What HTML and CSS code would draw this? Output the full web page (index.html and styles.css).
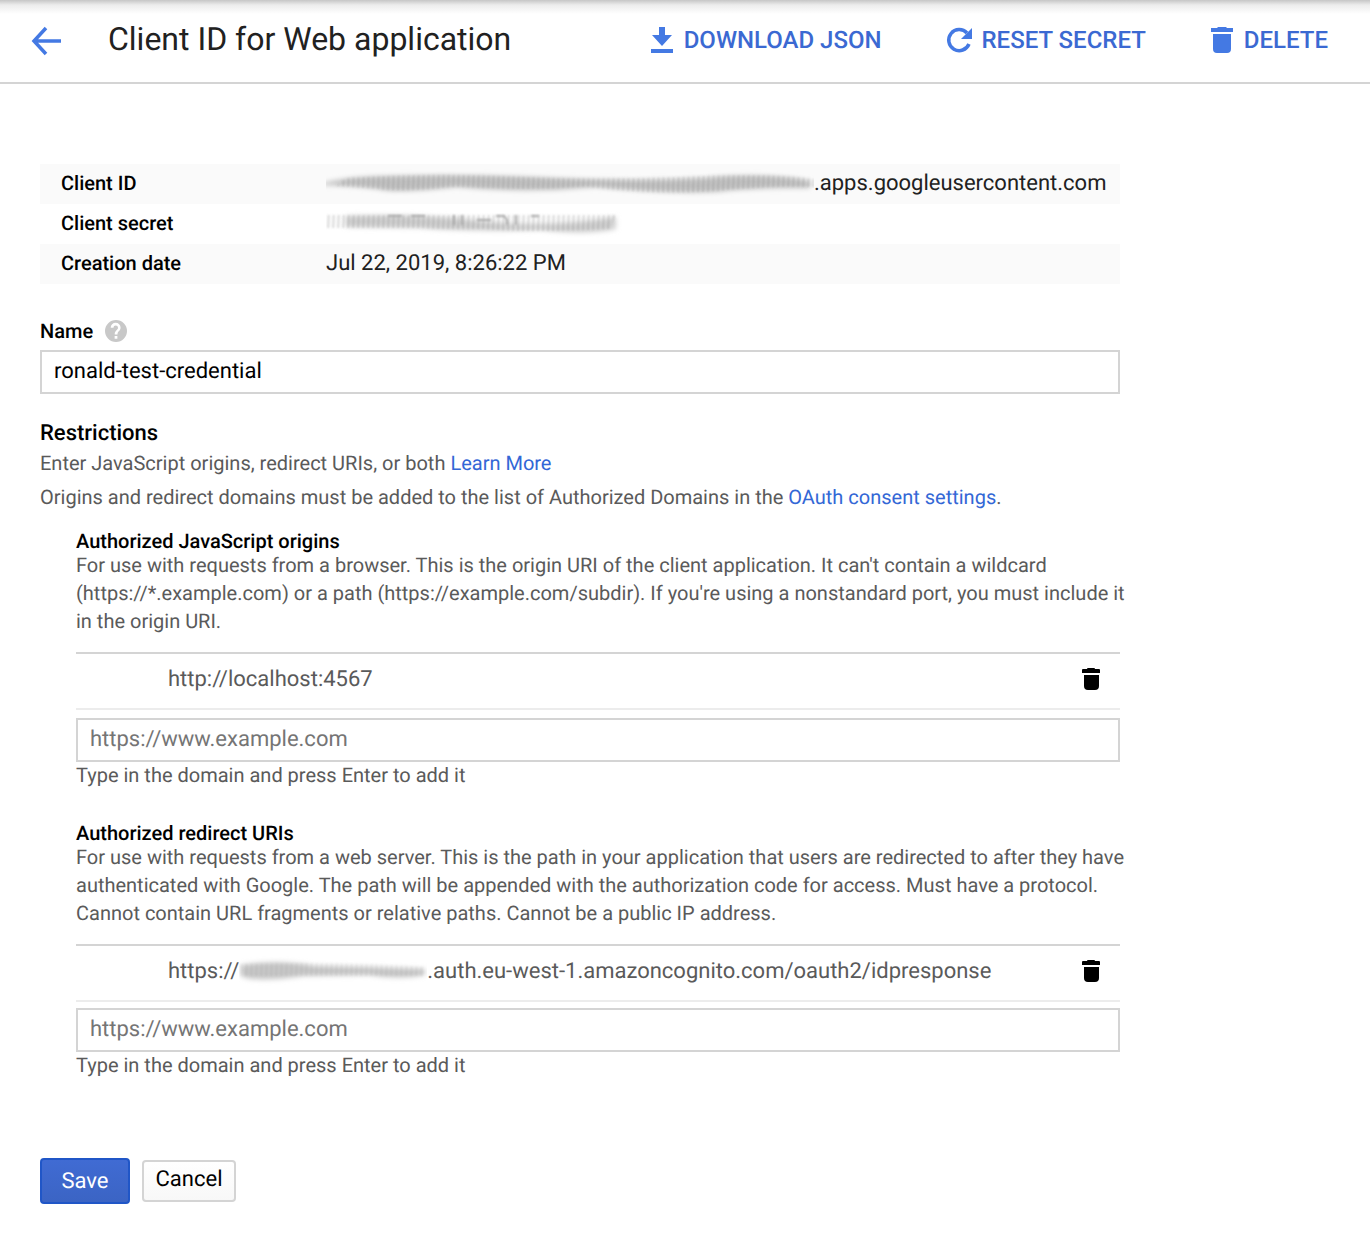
FILE: index.html
```html
<!DOCTYPE html>
<html lang="en">
<head>
<meta charset="utf-8">
<meta name="viewport" content="width=device-width, initial-scale=1">
<title>Client ID for Web application</title>
<link rel="stylesheet" href="styles.css">
</head>
<body>
<svg class="defs" aria-hidden="true">
  <defs>
    <symbol id="trash" viewBox="0 0 24 24"><path d="M7 2q0-1 1-1h6q1 0 1 1h4q1 0 1 1v3H2V3q0-1 1-1zM4 8h15v11q0 4-4 4H8q-4 0-4-4z"/></symbol>
    <pattern id="lines" width="5" height="24" patternUnits="userSpaceOnUse"><path d="M3 0l-1 24" stroke="#777" stroke-width="2" opacity=".3"/></pattern>
    <filter id="soft" x="-10%" y="-50%" width="120%" height="200%"><feGaussianBlur stdDeviation="2.500"/></filter>
    <filter id="fine" x="-10%" y="-50%" width="120%" height="200%"><feGaussianBlur stdDeviation="0.800"/></filter>
  </defs>
</svg>
<header class="topbar">
  <a class="back" href="#" aria-label="Back"><svg width="32" height="32" viewBox="0 0 32 32"><path d="M31 17H4M16 4L4 17l12 13" fill="none" stroke="currentColor" stroke-width="3.500"/></svg></a>
  <h1 class="title">Client ID for Web application</h1>
  <div class="actions">
    <button class="action" type="button"><svg width="24" height="28" viewBox="0 0 24 28"><path d="M9 1h6v8h7L12 20 2 9h7zM1 23h22v4H1z"/></svg>DOWNLOAD JSON</button>
    <button class="action" type="button"><svg width="26" height="28" viewBox="0 0 26 28"><path d="M21 7A10.500 10.500 0 1 0 23 18" fill="none" stroke="currentColor" stroke-width="3.500"/><path d="M26 2v11H15z"/></svg>RESET SECRET</button>
    <button class="action" type="button"><svg width="24" height="28" viewBox="0 0 24 28"><path d="M8 1h8l1 1h6v4H1V2h6zM3 8h18v15q0 4-4 4H7q-4 0-4-4z"/></svg>DELETE</button>
  </div>
</header>
<main class="content">
  <table class="info">
    <tbody>
      <tr><th scope="row">Client ID</th><td><span class="value"><svg class="smear" width="488" height="30" viewBox="0 0 488 30" aria-hidden="true">
        <path d="M-4 15Q25 8 60 8Q150 6 230 10T380 10Q440 4 484 13V20Q420 20 390 24Q340 26 270 19Q200 26 130 19Q70 26 52 21Q30 18-4 17z" fill="#c4c4c4" filter="url(#soft)"/>
        <path d="M20 10Q100 4 180 8T350 9Q440 4 488 11V19Q440 18 390 23T260 19Q200 23 130 19Q70 25 52 21L10 18z" fill="url(#lines)" filter="url(#fine)"/>
      </svg>.apps.googleusercontent.com</span></td></tr>
      <tr><th scope="row">Client secret</th><td><span class="value"><svg class="smear" width="296" height="30" viewBox="0 0 296 30" aria-hidden="true">
        <path d="M20 8Q90 5 155 13T290 9V21Q260 28 215 22Q140 24 95 20L20 19z" fill="#d2d2d2" filter="url(#soft)"/>
        <path d="M0 7H290L284 21Q200 25 155 21Q120 22 90 20H0z" fill="url(#lines)" filter="url(#fine)"/>
        <path d="M62 8h14M85 8h14M128 7v10M136 7v10M151 12h14M170 8h8l3 4v5M190 7v10M205 8h8" fill="none" stroke="#aaa" stroke-width="2" filter="url(#fine)"/>
      </svg></span></td></tr>
      <tr><th scope="row">Creation date</th><td>Jul 22, 2019, 8:26:22 PM</td></tr>
    </tbody>
  </table>
  <form class="form">
    <div class="label-row">
      <label for="name">Name</label>
      <svg width="22" height="22" viewBox="0 0 24 24" fill="#c8c8c8" role="img" aria-label="Help"><path d="M12 0a12 12 0 1 0 0 24 12 12 0 0 0 0-24zm1.500 20.500h-3v-3h3zm2.600-9.300-1 1.100c-.9.900-1.500 1.700-1.500 3.500h-3v-.7c0-1.300.6-2.500 1.500-3.400l1.400-1.500c.5-.4.700-1 .7-1.700a2.500 2.500 0 0 0-5 0h-3a5.400 5.400 0 0 1 10.800 0c0 1-.3 2-.9 2.700z"/></svg>
    </div>
    <input class="field" id="name" type="text" value="ronald-test-credential">
    <h2 class="heading">Restrictions</h2>
    <p class="intro">Enter JavaScript origins, redirect URIs, or both <a href="#">Learn More</a></p>
    <p class="intro">Origins and redirect domains must be added to the list of Authorized Domains in the <a href="#">OAuth consent settings</a>.</p>
    <section class="group">
      <label class="group-title" for="origin">Authorized JavaScript origins</label>
      <p class="description">For use with requests from a browser. This is the origin URI of the client application. It can't contain a wildcard (https://*.example.com) or a path (https://example.com/subdir). If you're using a nonstandard port, you must include it in the origin URI.</p>
      <div class="entry"><span class="value">http://localhost:4567</span><button class="remove" type="button" aria-label="Delete origin"><svg width="24" height="24"><use href="#trash"/></svg></button></div>
      <input class="field" id="origin" type="text" placeholder="https://www.example.com">
      <p class="hint">Type in the domain and press Enter to add it</p>
    </section>
    <section class="group">
      <label class="group-title" for="redirect">Authorized redirect URIs</label>
      <p class="description">For use with requests from a web server. This is the path in your application that users are redirected to after they have authenticated with Google. The path will be appended with the authorization code for access. Must have a protocol. Cannot contain URL fragments or relative paths. Cannot be a public IP address.</p>
      <div class="entry"><span class="value">https://<svg class="smear" width="188" height="30" viewBox="0 0 188 30" aria-hidden="true">
        <path d="M2 9Q40 3 75 10Q130 11 186 13V19Q160 24 130 19L65 20Q15 27 2 20z" fill="#c8c8c8" filter="url(#soft)"/>
        <path d="M2 8Q100 5 186 11V20H2z" fill="url(#lines)" opacity=".5" filter="url(#fine)"/>
      </svg>.auth.eu-west-1.amazoncognito.com/oauth2/idpresponse</span><button class="remove" type="button" aria-label="Delete redirect URI"><svg width="24" height="24"><use href="#trash"/></svg></button></div>
      <input class="field" id="redirect" type="text" placeholder="https://www.example.com">
      <p class="hint">Type in the domain and press Enter to add it</p>
    </section>
    <div class="buttons">
      <button class="save" type="submit">Save</button>
      <button class="cancel" type="button">Cancel</button>
    </div>
  </form>
</main>
</body>
</html>
```
FILE: styles.css
```css
* { box-sizing: border-box; }

body {
  margin: 0;
  background: #fff;
  color: #212121;
  font-family: Roboto, "Liberation Sans", sans-serif;
  font-size: 20px;
  text-rendering: geometricPrecision;
}

button, input { font: inherit; text-rendering: inherit; }
h1, h2, p { margin: 0; }
a { color: #3367d6; text-decoration: none; }
svg { flex: none; }
.defs { position: absolute; width: 0; height: 0; }

.topbar {
  display: flex;
  align-items: center;
  min-height: 84px;
  padding: 0 42px 2px 30px;
  border-bottom: 2px solid #d4d4d4;
  background: linear-gradient(#c6c6c6, #ececec 5px, #fff 14px);
}
.back { display: flex; color: #4479e3; }
.title {
  margin: 0 0 2px 46px;
  font-size: 32px;
  font-weight: 400;
  line-height: 40px;
}
.actions { display: flex; gap: 64px; margin-left: auto; }
.action {
  display: flex;
  align-items: center;
  gap: 10px;
  padding: 0;
  border: 0;
  background: none;
  color: #3b69d2;
  font-size: 24px;
  font-weight: 500;
  line-height: 32px;
  white-space: nowrap;
}
.action svg { color: #4479e3; fill: currentColor; }

.content { max-width: 1120px; padding: 80px 0 30px 40px; }

.info { width: 100%; border-collapse: collapse; }
.info tr:nth-child(odd) { background: #fafafa; }
.info th {
  width: 286px;
  height: 40px;
  padding: 0 0 2px 21px;
  color: #000;
  font-size: 20px;
  font-weight: 500;
  text-align: left;
}
.info td { padding: 0 0 2px; font-size: 22px; }
.value { display: flex; align-items: center; white-space: nowrap; }

.label-row {
  display: flex;
  align-items: center;
  gap: 12px;
  height: 30px;
  margin: 32px 0 4px;
  color: #000;
  font-weight: 500;
}
.field {
  display: block;
  width: 100%;
  height: 44px;
  padding: 0 12px 2px;
  border: 2px solid #d4d4d4;
  background: #fff;
  color: #000;
  font-size: 22px;
}
.field::placeholder { color: #757575; opacity: 1; }

.heading {
  margin: 25px 0 0;
  color: #000;
  font-size: 22px;
  font-weight: 500;
  line-height: 30px;
}
.intro { margin-bottom: 6px; color: #5a5a5a; line-height: 28px; }

.group { margin: 18px 0 32px 36px; color: #5a5a5a; }
.group-title {
  display: block;
  color: #000;
  font-weight: 500;
  line-height: 24px;
}
.description { margin: -2px -16px 17px 0; line-height: 28px; }
.entry {
  display: flex;
  align-items: center;
  justify-content: space-between;
  height: 58px;
  margin-bottom: 8px;
  padding: 0 16px 4px 92px;
  border-top: 2px solid #d4d4d4;
  border-bottom: 2px solid #ececec;
  font-size: 22px;
}
.group + .group .entry { margin-bottom: 6px; }
.remove { display: flex; padding: 0; border: 0; background: none; color: #000; }
.hint { margin-top: -1px; line-height: 28px; }

.buttons { display: flex; align-items: center; gap: 12px; margin-top: 79px; }
.save, .cancel {
  border: 2px solid #d4d4d4;
  border-radius: 4px;
  font-size: 22px;
}
.save {
  width: 90px;
  height: 46px;
  padding: 0;
  border-color: #2056c7;
  background: linear-gradient(#406bd3, #3b64c4);
  color: #fff;
}
.cancel {
  width: 94px;
  height: 42px;
  padding: 0 0 4px;
  background: linear-gradient(#fff, #f8f8f8);
  color: #000;
}
```
